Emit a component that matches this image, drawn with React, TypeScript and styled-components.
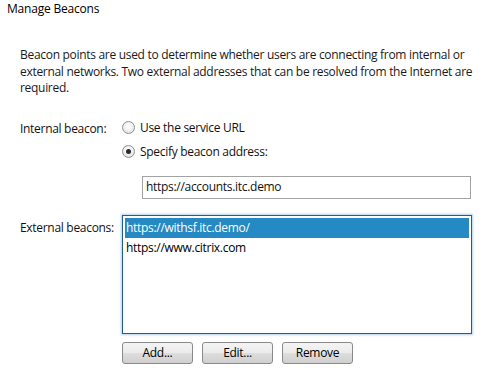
import React from "react";
import styled, { createGlobalStyle } from "styled-components";

const Global = createGlobalStyle`
  html, body { margin: 0; padding: 0; background: #ffffff; }
  body { font-family: "Segoe UI", "Open Sans", "Noto Sans", sans-serif; font-size: 12px; color: #111; }
`;

const Page = styled.div`
  width: 500px;
  height: 373px;
  box-sizing: border-box;
  padding: 1px 0 0 7px;
  display: flex;
  flex-direction: column;
`;

const Title = styled.div`
  font-size: 12px;
  line-height: 16px;
  letter-spacing: -0.2px;
  color: #000;
`;

const Body = styled.div`
  padding: 30px 0 0 13px;
  display: flex;
  flex-direction: column;
`;

const Description = styled.p`
  margin: 0;
  width: 470px;
  font-size: 12px;
  line-height: 16.5px;
  letter-spacing: -0.3px;
  color: #1a1a1a;
`;

const FormRow = styled.div<{ $top: number }>`
  display: grid;
  grid-template-columns: 102px 350px;
  margin-top: ${(p) => p.$top}px;
`;

const Label = styled.div<{ $pad: number }>`
  padding-top: ${(p) => p.$pad}px;
  line-height: 16px;
  letter-spacing: -0.3px;
`;

const Controls = styled.div`
  display: flex;
  flex-direction: column;
`;

const RadioRow = styled.label<{ $gap: number }>`
  display: flex;
  align-items: center;
  gap: 5px;
  height: 16px;
  margin-bottom: ${(p) => p.$gap}px;
  letter-spacing: -0.3px;
`;

const RadioCircle = styled.span<{ $checked: boolean }>`
  width: 11px;
  height: 11px;
  border-radius: 50%;
  border: 1px solid #8f8f8f;
  background: radial-gradient(circle at 50% 40%, #ffffff 0%, #f2f2f2 45%, #d6d6d6 100%);
  display: flex;
  align-items: center;
  justify-content: center;
  flex: none;
  &::after {
    content: "";
    display: ${(p) => (p.$checked ? "block" : "none")};
    width: 5px;
    height: 5px;
    border-radius: 50%;
    background: #2a2a2a;
  }
`;

const TextInput = styled.div`
  margin-left: 20px;
  width: 329px;
  height: 23px;
  box-sizing: border-box;
  border: 1px solid #a3a3a3;
  padding: 0 0 0 3px;
  display: flex;
  align-items: center;
  line-height: 16px;
  letter-spacing: -0.3px;
`;

const ListBox = styled.div`
  width: 350px;
  height: 119px;
  box-sizing: border-box;
  border: 1px solid #1f5e92;
  box-shadow: 0 0 2px 1px rgba(110, 170, 220, 0.55);
  padding: 2px;
  display: flex;
  flex-direction: column;
`;

const ListItem = styled.div<{ $selected: boolean }>`
  height: 20px;
  display: flex;
  align-items: center;
  padding-left: 1px;
  background: ${(p) => (p.$selected ? "#2589c4" : "transparent")};
  color: ${(p) => (p.$selected ? "#ffffff" : "#000")};
  letter-spacing: -0.3px;
`;

const ButtonBar = styled.div`
  display: flex;
  gap: 9px;
  margin: 8px 0 0 102px;
`;

const Button = styled.button`
  width: 71px;
  height: 22px;
  box-sizing: border-box;
  border: 1px solid #8a8a8a;
  border-radius: 3px;
  background: linear-gradient(#f4f4f4 0%, #ebebeb 50%, #dddddd 51%, #d0d0d0 100%);
  font-family: "Segoe UI", "Open Sans", "Noto Sans", sans-serif;
  font-size: 12px;
  letter-spacing: -0.3px;
  color: #000;
  padding: 0;
  display: flex;
  align-items: center;
  justify-content: center;
`;

export default function App() {
  return (
    <>
      <Global />
      <Page>
        <Title>Manage Beacons</Title>
        <Body>
          <Description>
            Beacon points are used to determine whether users are connecting from internal or
            external networks. Two external addresses that can be resolved from the Internet are
            required.
          </Description>
          <FormRow $top={23}>
            <Label $pad={1}>Internal beacon:</Label>
            <Controls>
              <RadioRow $gap={8}>
                <RadioCircle $checked={false} />
                Use the service URL
              </RadioRow>
              <RadioRow $gap={16}>
                <RadioCircle $checked={true} />
                Specify beacon address:
              </RadioRow>
              <TextInput>https://accounts.itc.demo</TextInput>
            </Controls>
          </FormRow>
          <FormRow $top={16}>
            <Label $pad={5}>External beacons:</Label>
            <ListBox>
              <ListItem $selected={true}>https://withsf.itc.demo/</ListItem>
              <ListItem $selected={false}>https://www.citrix.com</ListItem>
            </ListBox>
          </FormRow>
          <ButtonBar>
            <Button>Add...</Button>
            <Button>Edit...</Button>
            <Button>Remove</Button>
          </ButtonBar>
        </Body>
      </Page>
    </>
  );
}
